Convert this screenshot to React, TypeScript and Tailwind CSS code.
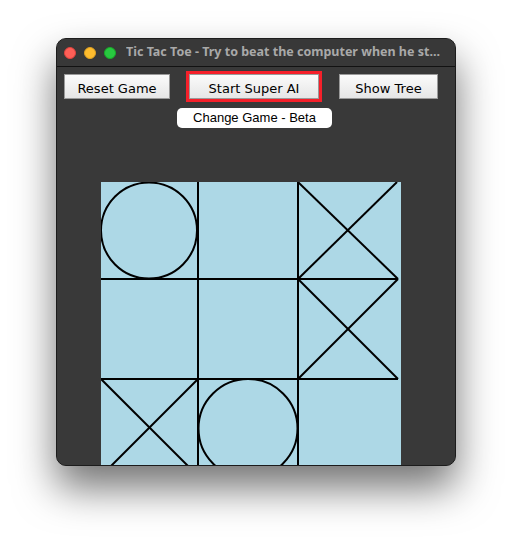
const TrafficLights = () => (
  <div className="flex items-center gap-[8px]">
    <span className="w-[12px] h-[12px] rounded-full bg-[#fe5f57] border border-[#e0443e]" />
    <span className="w-[12px] h-[12px] rounded-full bg-[#febc2e] border border-[#dea123]" />
    <span className="w-[12px] h-[12px] rounded-full bg-[#28c840] border border-[#1aab29]" />
  </div>
);

const btn =
  "h-[25px] flex items-center justify-center pt-[3px] border border-[#9a9a9a] bg-gradient-to-b from-[#fbfbfb] to-[#e6e6e6] text-black text-[13px] leading-none";

const Board = () => (
  <svg width="300" height="300" viewBox="0 0 300 300" className="block">
    <rect x="0" y="0" width="300" height="300" fill="#add8e6" />
    <g stroke="#000" strokeWidth="2" fill="none">
      <line x1="97" y1="0" x2="97" y2="300" />
      <line x1="197" y1="0" x2="197" y2="300" />
      <line x1="0" y1="97" x2="297" y2="97" />
      <line x1="0" y1="197" x2="297" y2="197" />
      {/* O top left */}
      <circle cx="48" cy="48.5" r="48" />
      {/* X top right */}
      <line x1="197" y1="0" x2="297" y2="97" />
      <line x1="296" y1="0" x2="197" y2="97" />
      {/* X middle right */}
      <line x1="197" y1="97" x2="297" y2="197" />
      <line x1="297" y1="97" x2="197" y2="197" />
      {/* X bottom left */}
      <line x1="0" y1="197" x2="97" y2="294" />
      <line x1="97" y1="197" x2="0" y2="294" />
      {/* O bottom middle */}
      <circle cx="147" cy="246.5" r="49.5" />
    </g>
  </svg>
);

export default function App() {
  return (
    <div className="w-[512px] h-[540px] bg-white pt-[38px] pl-[56px] overflow-hidden">
      <div className="w-[400px] h-[428px] rounded-[10px] bg-[#393939] border border-[#1c1c1c] shadow-[0_22px_40px_rgba(0,0,0,0.55)] overflow-hidden flex flex-col">
        <div
          className="h-[28px] shrink-0 flex items-center pl-[7px] gap-[10px] border-b border-[#121212] bg-[#383838]"
          style={{ fontFamily: '"Noto Sans", "Liberation Sans", sans-serif' }}
        >
          <TrafficLights />
          <span className="text-[12.5px] font-bold text-[#a9a9a9] whitespace-nowrap overflow-hidden">
            Tic Tac Toe - Try to beat the computer when he st...
          </span>
        </div>
        <div className="flex-1 overflow-hidden bg-[#393939]">
          <div
            className="flex items-center mt-[4px] pl-[7px]"
            style={{ fontFamily: '"Comic Sans MS", "DejaVu Sans", sans-serif' }}
          >
            <button className={`${btn} w-[106px]`}>Reset Game</button>
            <div className="ml-[16px] border-[3px] border-[#f5202a]">
              <button className={`${btn} w-[130px]`}>Start Super AI</button>
            </div>
            <button className={`${btn} w-[99px] ml-[17px]`}>Show Tree</button>
          </div>
          <div className="ml-[120px] mt-[6px] w-[155px] h-[20px] rounded-[5px] bg-white flex items-center justify-center text-[13px] text-black"
            style={{ fontFamily: '"Liberation Sans", Arial, sans-serif' }}
          >
            Change Game - Beta
          </div>
          <div className="ml-[44px] mt-[54px]">
            <Board />
          </div>
        </div>
      </div>
    </div>
  );
}
